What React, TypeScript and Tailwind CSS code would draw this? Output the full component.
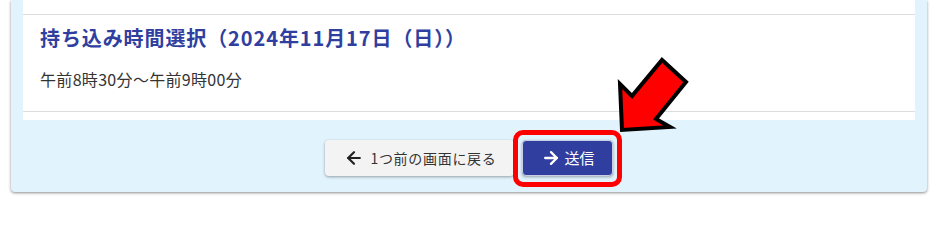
import { ArrowLeft, ArrowRight } from 'lucide-react';

const font = { fontFamily: '"Noto Sans CJK JP", "Noto Sans", sans-serif' };

export default function App() {
  return (
    <div className="relative w-[939px] h-[202px] overflow-hidden bg-white" style={font}>
      {/* 外枠パネル */}
      <div className="ml-[11px] w-[916px] rounded-b-[4px] bg-[#e1f3fc] pb-[16px] shadow-[0_1px_3px_rgba(0,0,0,0.45)]">
        <div className="mx-3 bg-white">
          <div className="h-[15px] border-b border-[#dddddd]" />
          <div className="border-b border-[#dddddd] px-[17px] pt-[9px] pb-[20px]">
            <h2 className="text-[20px] leading-[28px] font-bold tracking-[0.045em] text-[#303f9f]">
              持ち込み時間選択（2024年11月17日（日））
            </h2>
            <p className="mt-[15px] text-[16px] leading-[24px] tracking-[0.02em] text-[#333333]">
              午前8時30分～午前9時00分
            </p>
          </div>
          <div className="h-[8px]" />
        </div>

        {/* ボタン */}
        <div className="flex justify-center gap-[8px] pt-[20px]">
          <button className="flex h-[36px] items-center gap-[6px] rounded-[4px] bg-[#f3f3f3] pl-[19px] pr-[17px] text-[14px] tracking-[0.05em] text-[#333333] shadow-[0_1px_3px_rgba(0,0,0,0.35)]">
            <ArrowLeft size={20} strokeWidth={2.6} className="text-[#222222]" />
            1つ前の画面に戻る
          </button>
          <div className="relative">
            <button className="flex h-[36px] items-center gap-[4px] rounded-[4px] border border-[#c9cde6] bg-[#303f9f] pl-[18px] pr-[17px] text-[15px] text-white shadow-[0_1px_3px_rgba(0,0,0,0.35)]">
              <ArrowRight size={20} strokeWidth={2.8} />
              送信
            </button>
            <div className="absolute -left-[9px] -right-[9px] -top-[10px] -bottom-[11px] rounded-[10px] border-[5px] border-[#ff0000]" />
          </div>
        </div>
      </div>

      {/* 注目矢印 */}
      <svg className="absolute left-[600px] top-[50px]" width="100" height="95" viewBox="0 0 100 95">
        <polygon
          points="22,80 20,34 32,46 62,10 86,32 56,69 70,77"
          fill="#ff0000"
          stroke="#000000"
          strokeWidth="4"
          strokeLinejoin="miter"
        />
      </svg>
    </div>
  );
}
